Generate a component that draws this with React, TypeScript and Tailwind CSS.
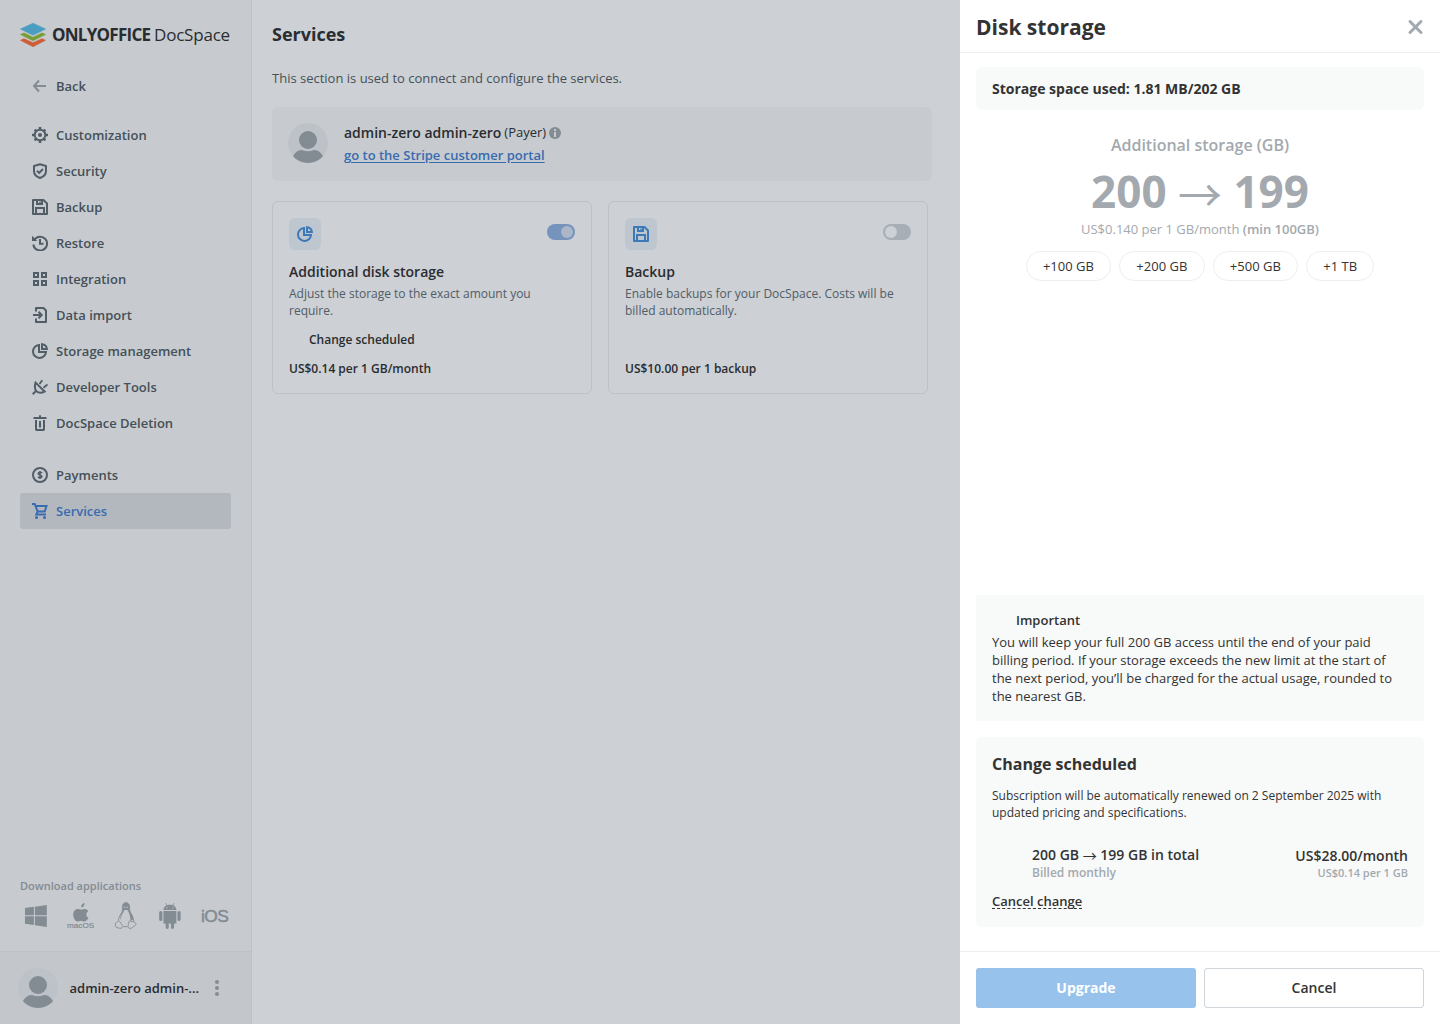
import type { ReactNode } from "react";

type IconProps = { className?: string };

const Svg = ({ children, className = "" }: { children: ReactNode; className?: string }) => (
  <svg viewBox="0 0 16 16" className={`size-4 shrink-0 ${className}`} fill="none" stroke="currentColor" strokeWidth="2">
    {children}
  </svg>
);

const BackIcon = () => (
  <Svg className="text-[#a3a9ae]">
    <path d="M7 2.500 2 8 7 13.500M2 8h12" />
  </Svg>
);
const GearIcon = () => (
  <Svg>
    <circle cx="8" cy="8" r="5.3" strokeWidth="1.9" />
    <circle cx="8" cy="8" r="2" fill="currentColor" stroke="none" />
    <path d="M8 0v2.500M8 13.500V16M0 8h2.500M13.500 8H16M2.700 2.700l1.600 1.600M11.700 11.700l1.600 1.600M2.700 13.300l1.600-1.600M11.700 4.300l1.600-1.600" strokeWidth="2.600" />
  </Svg>
);
const ShieldIcon = () => (
  <Svg>
    <path d="M8 1.200 14 3v5c0 3.200-2.600 5.800-6 7-3.400-1.200-6-3.800-6-7V3z" strokeLinejoin="round" />
    <path d="m5 7.700 2.200 2.200L11 6" />
  </Svg>
);
const FloppyIcon = ({ className }: IconProps) => (
  <Svg className={className}>
    <path d="M1 1h10.500L15 4.500V15H1z" strokeLinejoin="round" />
    <path d="M4 15V9h8v6M5 1v4h5V1" />
    <path d="M8 2.500v1.500" strokeWidth="1.300" />
  </Svg>
);
const RestoreIcon = () => (
  <Svg>
    <path d="M2.400 4.800A6.900 6.900 0 1 1 1.300 9.500" />
    <path d="M0 .8v5.200h5.200z" fill="currentColor" stroke="none" />
    <path d="M8 4v4.800h3.500" />
  </Svg>
);
const GridIcon = () => (
  <Svg>
    <path d="M2 2h4v4H2zM10 2h4v4h-4zM2 10h4v4H2zM10 10h4v4h-4z" />
  </Svg>
);
const ImportIcon = () => (
  <Svg>
    <path d="M4 4.500V1h7.500L14 3.500V15H4v-3.500" strokeLinejoin="round" />
    <path d="M1 8h8M6.500 4.800 9.700 8l-3.200 3.200" />
  </Svg>
);
const PieIcon = ({ className }: IconProps) => (
  <Svg className={className}>
    <path d="M7 2A6.500 6.500 0 1 0 14 9H7z" />
    <path d="M10 1.200V6h4.900A5.400 5.400 0 0 0 10 1.200z" />
  </Svg>
);
const PlugIcon = () => (
  <Svg>
    <path d="M.7 15.300 4 12M3.600 3.600l9 9c-2.600 1.300-6.200 1.500-8.200-.5S2.800 6.400 3.600 3.600z" />
    <path d="M7.500 5l2.800-3.800M11.500 8.700l4-3.200" strokeWidth="1.800" />
  </Svg>
);
const TrashIcon = () => (
  <Svg>
    <path d="M1.500 3h13M8 .3v2" />
    <path d="M4 5v9.500l1 .5h6l1-.5V5M8 6v6.500" strokeLinejoin="round" />
  </Svg>
);
const DollarIcon = () => (
  <Svg>
    <circle cx="8" cy="8" r="7" />
    <path d="M10 6.200C9.300 5 6.200 5 6.200 6.700S9.900 7.800 9.900 9.400 6.700 11 6 9.800M8 4v8" strokeWidth="1.500" />
  </Svg>
);
const CartIcon = () => (
  <Svg>
    <path d="M0 1h2.700l3 7.500h7L14.500 3H3.700M5.500 8.500 4.300 11.500H14" />
    <circle cx="4.500" cy="14.500" r="1.500" fill="currentColor" stroke="none" />
    <circle cx="12.500" cy="14.500" r="1.500" fill="currentColor" stroke="none" />
  </Svg>
);

const Avatar = () => (
  <svg viewBox="0 0 40 40" className="size-10 shrink-0">
    <circle cx="20" cy="20" r="20" fill="#eceef1" />
    <circle cx="20" cy="17" r="9" fill="#a3a9ae" />
    <path d="M5 33.200C7 29.500 10.500 26.500 14 27c4 1.800 8 1.800 12 0 3.500-.5 7 2.500 9 6.200A20 20 0 0 1 5 33.200z" fill="#a3a9ae" />
  </svg>
);

const Logo = () => (
  <div className="flex h-6 items-center pl-5">
    <svg viewBox="0 0 26 24" className="h-6 w-[26px] shrink-0">
      <path d="M.5 17.300 13 23.700l12.500-6.400-3.500-1.600-9 4-9-4z" fill="#ff6f3d" stroke="#ff6f3d" strokeWidth=".6" strokeLinejoin="round" />
      <path d="M.5 11.500 13 17.700l12.500-6.200L22 9.900l-9 4.400-9-4.400z" fill="#95c038" stroke="#95c038" strokeWidth=".6" strokeLinejoin="round" />
      <path d="M.5 6 13 .3 25.500 6 13 12.200z" fill="#5dc0e8" stroke="#5dc0e8" strokeWidth=".6" strokeLinejoin="round" />
    </svg>
    <span className="ml-1.5 w-[102px] text-[17px] font-bold tracking-[-0.75px]">ONLYOFFICE</span>
    <span className="text-[17px] tracking-[-0.2px]">DocSpace</span>
  </div>
);

const NavItem = ({ icon, label, active }: { icon: ReactNode; label: string; active?: boolean }) => (
  <div
    className={`mx-5 flex h-9 items-center gap-2 rounded-[3px] pl-3 text-[13px] font-semibold ${
      active ? "bg-[#dfe1e5] text-[#4781d1]" : "text-[#657077]"
    }`}
  >
    {icon}
    <span className={active ? "pt-0.5" : "pt-0.5 text-[#555f65]"}>{label}</span>
  </div>
);

const Downloads = () => (
  <div className="px-5">
    <div className="h-4 text-[11px] leading-4 font-semibold text-[#a3a9ae]">Download applications</div>
    <div className="mt-[6px] flex gap-[13px] text-[#a3a9ae]">
      <svg viewBox="0 0 32 32" className="size-8" fill="currentColor">
        <path d="M5 7.900 14 6.700V15.200H5zM15 6.600 27 5V15.200H15zM5 16.200h9v8.800L5 23.800zM15 16.200H27V27L15 25.200z" />
      </svg>
      <svg viewBox="0 0 32 32" className="size-8" fill="currentColor">
        <path d="M18.400 6.600c.9-1 1.300-2.300 1.200-3.600-1.300.1-3.500 1.400-3.400 4.300.8 0 1.600-.2 2.200-.7zM23.700 17.800c-2.900-1.300-2.900-5.200-.3-6.600-2-2.900-5.100-2.300-6.900-1.400-1.700-.8-5.200-1.600-7.400 1.400-2 3.100-.2 8 2 9.900 1.900 1.400 3.100-.3 5-.3s3 1.600 4.900.3c1.200-.9 2.200-2.200 2.700-3.300z" />
        <text x="2" y="27.800" fontFamily="Liberation Sans" fontSize="8" textLength="27.500" lengthAdjust="spacingAndGlyphs" stroke="currentColor" strokeWidth=".2">
          macOS
        </text>
      </svg>
      <svg viewBox="0 0 32 32" className="size-8" fill="none" stroke="currentColor" strokeWidth=".9">
        <path d="M12.500 10V6.500c0-5 7.200-5 7.200 0V10c.3 3 4.300 6.300 4.200 11.300 2 1.800 3 3.100 1.500 4.200-2.500 1.100-3 3-5.300 3-1.700 0-1.800-1.700-2.600-1.800h-4.300c-1 .1-1 2-3.300 1.700-2-.6-4.300-.9-4.600-2-.3-1 .5-2 .4-3.300.7-1.100 2-.7 2.700-2.300.3-4.800 3.700-7.300 4.100-10.800z" />
        <path d="M12.800 8V5.500c.7-4.200 6-4 6.600 0V9c.7 3.300 3.700 5.300 3.800 10.500l-2.500 1.200c-.2-4-1.200-8.200-3.200-10.700h-2.800c-2 3.500-3.700 5.500-3.800 10-1.400-3.600 1.100-7 2-10z" fill="currentColor" stroke="none" />
        <path d="M13.700 7.200h1.700M16.500 7.200h1.700" stroke="#f8f9f9" />
        <path d="M8.500 20.500c2 1.700 3.300 3.500 4 5.500M20 20.500c-1.500 1.300-1.700 4-1.700 6M20 20.500c1.500 2 3 1.500 4 .5" />
      </svg>
      <svg viewBox="0 0 32 32" className="size-8" fill="currentColor">
        <path d="M9.500 10C9.500 3 22.500 3 22.500 10zM9.500 11h13v12.500h-2.300v3.800c0 2.300-3.100 2.300-3.100 0v-3.800h-2.300v3.800c0 2.300-3.100 2.300-3.100 0v-3.800H9.500z" />
        <rect x="5.200" y="11" width="3.200" height="10" rx="1.600" />
        <rect x="23.600" y="11" width="3.200" height="10" rx="1.600" />
        <path d="m11.500 3 2 3M20.500 3l-2 3" stroke="currentColor" strokeWidth=".8" />
        <circle cx="13" cy="7.800" r=".7" fill="#f8f9f9" />
        <circle cx="19" cy="7.800" r=".7" fill="#f8f9f9" />
      </svg>
      <svg viewBox="0 0 32 32" className="size-8" fill="currentColor">
        <text x="2" y="22.300" fontFamily="Liberation Sans" fontSize="17.500" textLength="28" stroke="currentColor" strokeWidth=".5">
          iOS
        </text>
      </svg>
    </div>
  </div>
);

const Sidebar = () => (
  <aside className="flex w-[252px] shrink-0 flex-col border-r border-[#eceef1] bg-[#f8f9f9] pt-[23px]">
    <Logo />
    <div className="mt-[21px]">
      <NavItem icon={<BackIcon />} label="Back" />
    </div>
    <nav className="mt-[13px]">
      <NavItem icon={<GearIcon />} label="Customization" />
      <NavItem icon={<ShieldIcon />} label="Security" />
      <NavItem icon={<FloppyIcon />} label="Backup" />
      <NavItem icon={<RestoreIcon />} label="Restore" />
      <NavItem icon={<GridIcon />} label="Integration" />
      <NavItem icon={<ImportIcon />} label="Data import" />
      <NavItem icon={<PieIcon />} label="Storage management" />
      <NavItem icon={<PlugIcon />} label="Developer Tools" />
      <NavItem icon={<TrashIcon />} label="DocSpace Deletion" />
    </nav>
    <div className="mt-4">
      <NavItem icon={<DollarIcon />} label="Payments" />
      <NavItem icon={<CartIcon />} label="Services" active />
    </div>
    <div className="mt-auto">
      <Downloads />
      <div className="mt-[19px] flex h-[73px] items-center border-t border-[#eceef1] bg-[#f3f4f4] pl-[18px]">
        <Avatar />
        <span className="ml-[11.5px] w-[136.5px] pt-0.5 text-[13px] font-semibold">admin-zero admin-...</span>
        <svg viewBox="0 0 4 16" className="ml-[9px] h-4 w-1" fill="#a3a9ae">
          <circle cx="2" cy="2" r="2" />
          <circle cx="2" cy="8" r="2" />
          <circle cx="2" cy="14" r="2" />
        </svg>
      </div>
    </div>
  </aside>
);

const Toggle = ({ on }: { on?: boolean }) => (
  <div className={`flex h-4 w-7 items-center rounded-full px-0.5 ${on ? "justify-end bg-[#91b3e3]" : "bg-[#d0d5da]"}`}>
    <div className={`size-3 rounded-full ${on ? "bg-[#d6e0ee]" : "bg-white"}`} />
  </div>
);

type CardProps = { icon: ReactNode; title: string; text: string; note?: string; price: string; on?: boolean };

const ServiceCard = ({ icon, title, text, note, price, on }: CardProps) => (
  <div className="flex h-[193px] w-[320px] flex-col rounded-md border border-[#eceef1] p-4">
    <div className="flex justify-between">
      <div className="flex size-8 items-center justify-center rounded-md bg-[#edf3fa] text-[#4b93db]">{icon}</div>
      <div className="pt-1.5">
        <Toggle on={on} />
      </div>
    </div>
    <div className="mt-3 text-sm leading-5 font-semibold">{title}</div>
    <p className="mt-[3px] w-[280px] text-xs leading-[17px] text-[#657077]">{text}</p>
    <div className="mt-[13px] h-4 pl-5 text-xs leading-4 font-semibold">{note}</div>
    <div className="mt-[13px] text-xs leading-4 font-semibold">{price}</div>
  </div>
);

const Main = () => (
  <main className="flex-1 px-5">
    <h1 className="mt-[22px] text-lg leading-6 font-bold">Services</h1>
    <p className="mt-[22px] text-[13px] leading-5 text-[#555f65]">This section is used to connect and configure the services.</p>
    <section className="mt-[19px] flex h-[74px] w-[660px] items-start rounded-md bg-[#f8f9f9] px-4 pt-4">
      <Avatar />
      <div className="ml-4">
        <div className="flex h-5 items-center">
          <span className="text-sm font-semibold">admin-zero admin-zero</span>
          <span className="ml-[3px] text-[13px]">(Payer)</span>
          <svg viewBox="0 0 12 12" className="ml-[3px] size-3">
            <circle cx="6" cy="6" r="6" fill="#a3a9ae" />
            <path d="M6 2v2M6 5v5" stroke="#f8f9f9" strokeWidth="2" />
          </svg>
        </div>
        <div className="mt-0.5 text-[13px] leading-5 font-semibold text-[#4781d1] underline underline-offset-2">
          go to the Stripe customer portal
        </div>
      </div>
    </section>
    <section className="mt-5 flex gap-4">
      <ServiceCard
        icon={<PieIcon />}
        title="Additional disk storage"
        text="Adjust the storage to the exact amount you require."
        note="Change scheduled"
        price="US$0.14 per 1 GB/month"
        on
      />
      <ServiceCard
        icon={<FloppyIcon />}
        title="Backup"
        text="Enable backups for your DocSpace. Costs will be billed automatically."
        price="US$10.00 per 1 backup"
      />
    </section>
  </main>
);

const Pill = ({ children }: { children: ReactNode }) => (
  <button className="h-[30px] rounded-full border border-[#eceef1] px-[16.25px] text-[13px] leading-7 font-medium">{children}</button>
);

const Arrow = () => <span className="align-[-0.1em] font-['Noto_Sans_CJK_SC','Noto_Sans_CJK_JP',sans-serif] leading-none font-normal">→</span>;

const DiskStoragePanel = () => (
  <aside className="absolute inset-y-0 right-0 flex w-[480px] flex-col bg-white">
    <header className="flex h-[53px] items-center justify-between border-b border-[#eceef1] px-4 pt-0.5">
      <h2 className="pt-0.5 text-[21px] font-bold">Disk storage</h2>
      <svg viewBox="0 0 17 17" className="size-[17px]" fill="none" stroke="#a3a9ae" strokeWidth="3" strokeLinecap="round">
        <path d="m3 2.500 11 11M14 2.500l-11 11" />
      </svg>
    </header>
    <div className="flex flex-1 flex-col px-4 pt-3.5">
      <div className="h-[43px] rounded-md bg-[#f8f9f9] px-4 text-sm leading-[43px] font-bold">Storage space used: 1.81 MB/202 GB</div>
      <div className="flex flex-col items-center text-[#a3a9ae]">
        <div className="mt-6 text-base leading-[22px] font-semibold">Additional storage (GB)</div>
        <div className="mt-[5px] h-[60px] text-[44px] leading-[60px] font-bold">
          200 <Arrow /> 199
        </div>
        <div className="mt-[-2px] text-[13px] leading-5">
          US$0.140 per 1 GB/month <span className="font-semibold">(min 100GB)</span>
        </div>
      </div>
      <div className="mt-3 flex justify-center gap-2">
        <Pill>+100 GB</Pill>
        <Pill>+200 GB</Pill>
        <Pill>+500 GB</Pill>
        <Pill>+1 TB</Pill>
      </div>
      <section className="mt-auto h-[126px] bg-[#f8f9f9] px-4 pt-4 text-[13px]">
        <h3 className="pl-6 leading-[18px] font-semibold">Important</h3>
        <p className="mt-1 leading-[18px]">
          You will keep your full 200 GB access until the end of your paid billing period. If your storage exceeds the new limit at
          the start of the next period, you’ll be charged for the actual usage, rounded to the nearest GB.
        </p>
      </section>
      <section className="mt-4 mb-6 h-[190px] rounded-md bg-[#f8f9f9] px-4 pt-4">
        <h3 className="text-base leading-[22px] font-bold">Change scheduled</h3>
        <p className="mt-3 text-xs leading-[17px]">
          Subscription will be automatically renewed on 2 September 2025 with updated pricing and specifications.
        </p>
        <div className="mt-6 flex h-9 justify-between pl-10">
          <div>
            <div className="h-5 text-sm leading-5 font-semibold">
              200 GB <Arrow /> 199 GB in total
            </div>
            <div className="text-xs leading-4 font-semibold text-[#a3a9ae]">Billed monthly</div>
          </div>
          <div className="text-right">
            <div className="h-5 text-sm leading-[22px] font-semibold">US$28.00/month</div>
            <div className="text-[11px] leading-4 font-semibold text-[#a3a9ae]">US$0.14 per 1 GB</div>
          </div>
        </div>
        <div className="mt-3 w-fit border-b border-dashed border-[#333] pt-px text-[13px] leading-[14px] font-semibold">Cancel change</div>
      </section>
    </div>
    <footer className="flex h-[73px] gap-2 border-t border-[#eceef1] px-4 pt-4">
      <button className="h-10 w-[220px] rounded-[3px] bg-[#97c2eb] text-sm font-bold text-white">Upgrade</button>
      <button className="h-10 w-[220px] rounded-[3px] border border-[#d0d5da] text-sm font-semibold">Cancel</button>
    </footer>
  </aside>
);

export default function App() {
  return (
    <div className="relative flex h-[1024px] w-[1440px] overflow-hidden bg-white font-['Open_Sans','Noto_Sans',sans-serif] text-[#333]">
      <Sidebar />
      <Main />
      <div className="absolute inset-0 bg-[rgba(6,22,38,0.2)]" />
      <DiskStoragePanel />
    </div>
  );
}
